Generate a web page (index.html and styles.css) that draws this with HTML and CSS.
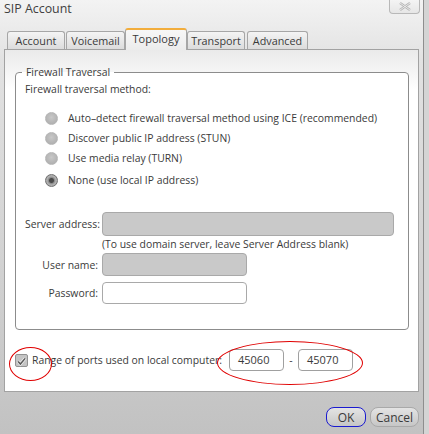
FILE: index.html
```html
<!DOCTYPE html>
<html lang="en">

<head>
  <meta charset="UTF-8" />
  <meta name="viewport" content="width=device-width, initial-scale=1.0" />
  <title>SIP Account</title>
  <link rel="stylesheet" href="styles.css">
</head>

<body>
  <div class="dialog">
    <div class="titlebar">
      <span class="title">SIP Account</span>
      <span class="close">
        <svg width="14" height="9" viewBox="0 0 14 9">
          <path d="M2 1 L12 8 M12 1 L2 8" stroke="#b4b4b4" stroke-width="2.4" fill="none" />
          <path d="M2 1 L12 8 M12 1 L2 8" stroke="#f4f4f4" stroke-width="0.8" fill="none" />
        </svg>
      </span>
    </div>

    <ul class="tabs">
      <li class="tab-account">Account</li>
      <li class="tab-voicemail">Voicemail</li>
      <li class="active">Topology</li>
      <li class="tab-transport">Transport</li>
      <li class="tab-advanced">Advanced</li>
    </ul>

    <div class="panel">
      <fieldset class="group">
        <legend>Firewall Traversal</legend>
        <p class="method">Firewall traversal method:</p>
        <ul class="options">
          <li><span class="radio"></span>Auto–detect firewall traversal method using ICE (recommended)</li>
          <li><span class="radio"></span>Discover public IP address (STUN)</li>
          <li><span class="radio"></span>Use media relay (TURN)</li>
          <li class="last"><span class="radio checked"></span>None (use local IP address)</li>
        </ul>
        <div class="fields">
          <label>Server address:</label>
          <div class="input disabled wide"></div>
          <span></span>
          <p class="hint">(To use domain server, leave Server Address blank)</p>
          <label>User name:</label>
          <div class="input disabled"></div>
          <label class="pass-label">Password:</label>
          <div class="input pass"></div>
        </div>
      </fieldset>

      <div class="ports">
        <span class="check">
          <svg width="13" height="13" viewBox="0 0 13 13">
            <path d="M2.5 6.5 L5.2 9.5 L10.8 2.8" stroke="#f2f2f2" stroke-width="3.6" fill="none" />
            <path d="M2.5 6.5 L5.2 9.5 L10.8 2.8" stroke="#5a5a5a" stroke-width="1.8" fill="none" />
          </svg>
        </span>
        <span class="ports-label">Range of ports used on local computer:</span>
        <span class="input port">45060</span>
        <span class="dash">-</span>
        <span class="input port">45070</span>
      </div>
    </div>

    <div class="buttons">
      <button class="ok">OK</button>
      <button>Cancel</button>
    </div>

    <span class="mark mark-check"></span>
    <span class="mark mark-ports"></span>
  </div>
</body>

</html>
```

FILE: styles.css
```css
* {
  box-sizing: border-box;
}

body {
  margin: 0;
  width: 429px;
  height: 434px;
  overflow: hidden;
  background: #d4d4d4;
  font-family: "Open Sans", "Noto Sans", sans-serif;
  font-size: 10.4px;
  color: #3a3a3a;
}

.dialog {
  position: relative;
  width: 424px;
  height: 434px;
  border-right: 1px solid #8e8e8e;
  background: linear-gradient(#f3f3f3, #e2e2e2 60px, #cfcfcf 300px, #c2c2c2);
}

.titlebar {
  height: 28px;
  display: flex;
  align-items: flex-start;
}

.title {
  padding: 1px 0 0 4px;
  font-size: 12.4px;
  line-height: 16px;
  color: #404040;
}

.close {
  margin-left: auto;
  margin-right: 3px;
  width: 31px;
  height: 14px;
  border: 1px solid #b8b8b8;
  border-top: none;
  border-radius: 0 0 4px 4px;
  background: linear-gradient(#f4f4f4, #e6e6e6);
  display: flex;
  align-items: center;
  justify-content: center;
}

.tabs {
  margin: 0;
  padding: 0 0 0 7px;
  list-style: none;
  height: 21px;
  display: flex;
  align-items: flex-end;
  gap: 1px;
  position: relative;
  z-index: 1;
}

.tabs li {
  height: 18px;
  border: 1px solid #a6a6a6;
  border-bottom: none;
  border-radius: 3px 3px 0 0;
  background: linear-gradient(#f4f4f4, #dcdcdc);
  font-size: 10.8px;
  line-height: 17px;
  text-align: center;
  color: #3a3a3a;
}

.tabs .tab-account {
  width: 58px;
}

.tabs .tab-voicemail {
  width: 59px;
}

.tabs .tab-transport {
  width: 58px;
}

.tabs .tab-advanced {
  width: 61px;
  margin-left: 1px;
}

.tabs li.active {
  width: 62px;
  height: 22px;
  margin: 0 -1px -1px -1px;
  border-top: 2px solid #f2ad3c;
  background: linear-gradient(#f7f7f7, #ececec);
  font-size: 11px;
  line-height: 17px;
}

.panel {
  margin-left: 4px;
  width: 415px;
  height: 343px;
  border: 1px solid #a2a2a2;
  background: linear-gradient(#eaeaea, #ffffff 40px);
  padding: 15px 9px 0 10px;
}

.group {
  margin: 0;
  padding: 0 9px 25px 9px;
  border: 1px solid #8c8c8c;
  border-radius: 4px;
  background: #ffffff;
}

.group legend {
  margin-left: -3px;
  padding: 0 4px;
  line-height: 15px;
}

.method {
  margin: 2px 0 0 0;
  line-height: 15px;
}

.options {
  margin: 11px 0 0 0;
  padding: 0 0 0 20px;
  list-style: none;
}

.options li {
  height: 20px;
  display: flex;
  align-items: center;
}

.options li.last {
  margin-top: 2px;
}

.radio {
  width: 13px;
  height: 13px;
  margin-right: 10px;
  border-radius: 50%;
  border: 1px solid #b6b6b6;
  background: radial-gradient(circle at 50% 40%, #c8c8c8, #a9a9a9);
}

.radio.checked {
  border-color: #707070;
  background: radial-gradient(circle, #4a4a4a 0, #4a4a4a 2px, #8c8c8c 3px, #b2b2b2 4.5px, #a4a4a4 6px);
}

.fields {
  margin-top: 22px;
  display: grid;
  grid-template-columns: 73px 1fr;
  column-gap: 4px;
  align-items: center;
}

.fields label {
  text-align: right;
  white-space: nowrap;
}

.input {
  height: 23px;
  width: 145px;
  border: 1px solid #a9a9a9;
  border-radius: 4px;
  background: #ffffff;
}

.input.disabled {
  background: #c9c9c9;
}

.input.wide {
  width: 292px;
  height: 24px;
}

.fields .pass,
.fields .pass-label {
  margin-top: 6px;
}

.fields .pass {
  height: 22px;
}

.hint {
  margin: 1px 0 2px 0;
  line-height: 14px;
  white-space: nowrap;
}

.ports {
  margin-top: 19px;
  height: 22px;
  display: flex;
  align-items: center;
}

.check {
  width: 13px;
  height: 13px;
  margin-right: 4px;
  border: 1px solid #929292;
  border-radius: 2px;
  background: #c4c4c4;
  display: flex;
}

.ports-label {
  margin-right: 7px;
}

.input.port {
  width: 55px;
  height: 22px;
  padding-left: 8px;
  font-size: 11px;
  line-height: 20px;
  border-color: #a0a0a0;
}

.dash {
  width: 14px;
  text-align: center;
}

.buttons {
  margin-top: 15px;
  padding-right: 4px;
  display: flex;
  justify-content: flex-end;
  gap: 4px;
}

.buttons button {
  height: 20px;
  width: 49px;
  padding: 0;
  border: 1px solid #a9a9a9;
  border-radius: 8px;
  background: linear-gradient(#e4e4e4, #c6c6c6);
  font-family: inherit;
  font-size: 12px;
  color: #3a3a3a;
}

.buttons button.ok {
  width: 40px;
  border-color: #1a1ad0;
}

.mark {
  position: absolute;
  border: 1.5px solid #e00000;
  border-radius: 50%;
}

.mark-check {
  left: 9px;
  top: 347px;
  width: 43px;
  height: 34px;
}

.mark-ports {
  left: 217px;
  top: 341px;
  width: 146px;
  height: 44px;
}
```
